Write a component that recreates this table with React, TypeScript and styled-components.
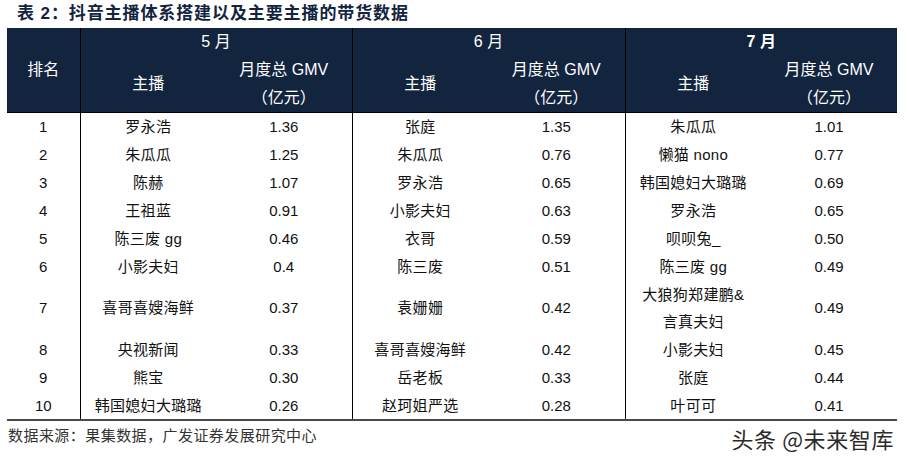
import React from "react";
import styled, { createGlobalStyle } from "styled-components";

const Global = createGlobalStyle`
  html, body { margin: 0; padding: 0; background: #fff; }
  body { font-family: "Liberation Sans", "Noto Sans CJK SC", sans-serif; }
`;

const NAVY = "#13243f";
const CJK = `"Liberation Sans", "Noto Sans CJK SC", sans-serif`;

const Page = styled.div`
  width: 907px;
  height: 462px;
  overflow: hidden;
  display: flex;
  flex-direction: column;
`;

const Title = styled.h1`
  margin: 0;
  height: 28px;
  padding-left: 17px;
  font-family: ${CJK};
  font-size: 17px;
  font-weight: 700;
  line-height: 28px;
  letter-spacing: 0.9px;
  color: ${NAVY};
  white-space: nowrap;
`;

const Table = styled.table`
  margin-left: 7px;
  width: 890px;
  table-layout: fixed;
  border-collapse: collapse;
  border-spacing: 0;
  font-family: ${CJK};
  color: #111;
`;

const Head = styled.thead`
  border-bottom: 1px solid #000;
`;

const Body = styled.tbody`
  border-bottom: 2px solid #4a4a4a;
`;

const HeadCell = styled.th<{ $divider?: boolean; $strong?: boolean }>`
  padding: 0;
  height: 28px;
  line-height: 28px;
  background: ${NAVY};
  color: #fff;
  font-size: 16px;
  font-weight: ${(p) => (p.$strong ? 700 : 400)};
  text-align: center;
  vertical-align: middle;
  white-space: nowrap;
  border-left: ${(p) => (p.$divider ? "1px solid #000" : "none")};
`;

const Row = styled.tr<{ $tall?: boolean }>`
  height: ${(p) => (p.$tall ? "55px" : "28px")};
`;

const Cell = styled.td<{ $divider?: boolean; $num?: boolean }>`
  padding: 0;
  text-align: center;
  vertical-align: middle;
  font-size: 15px;
  line-height: 27.5px;
  letter-spacing: ${(p) => (p.$num ? "0" : "0.3px")};
  white-space: nowrap;
  color: #111;
  border-left: ${(p) => (p.$divider ? "1px solid #000" : "none")};
`;

const Footer = styled.div`
  display: flex;
  justify-content: space-between;
  align-items: flex-start;
  padding: 3px 13px 0 8px;
`;

const Source = styled.div`
  font-family: ${CJK};
  font-size: 15px;
  line-height: 24px;
  letter-spacing: 0.45px;
  color: #333;
`;

const Watermark = styled.div`
  font-family: "Noto Sans CJK SC", sans-serif;
  font-size: 22px;
  line-height: 28px;
  color: #2b2b2b;
  letter-spacing: 0.6px;
  text-shadow: 1px 1px 0 #fff, -1px -1px 0 #fff;
`;

type Entry = [string, string];
type RowData = { rank: string; may: Entry; jun: Entry; jul: Entry; tall?: boolean };

const rows: RowData[] = [
  { rank: "1", may: ["罗永浩", "1.36"], jun: ["张庭", "1.35"], jul: ["朱瓜瓜", "1.01"] },
  { rank: "2", may: ["朱瓜瓜", "1.25"], jun: ["朱瓜瓜", "0.76"], jul: ["懒猫 nono", "0.77"] },
  { rank: "3", may: ["陈赫", "1.07"], jun: ["罗永浩", "0.65"], jul: ["韩国媳妇大璐璐", "0.69"] },
  { rank: "4", may: ["王祖蓝", "0.91"], jun: ["小影夫妇", "0.63"], jul: ["罗永浩", "0.65"] },
  { rank: "5", may: ["陈三废 gg", "0.46"], jun: ["衣哥", "0.59"], jul: ["呗呗兔_", "0.50"] },
  { rank: "6", may: ["小影夫妇", "0.4"], jun: ["陈三废", "0.51"], jul: ["陈三废 gg", "0.49"] },
  { rank: "7", may: ["喜哥喜嫂海鲜", "0.37"], jun: ["袁姗姗", "0.42"], jul: ["大狼狗郑建鹏&\n言真夫妇", "0.49"], tall: true },
  { rank: "8", may: ["央视新闻", "0.33"], jun: ["喜哥喜嫂海鲜", "0.42"], jul: ["小影夫妇", "0.45"] },
  { rank: "9", may: ["熊宝", "0.30"], jun: ["岳老板", "0.33"], jul: ["张庭", "0.44"] },
  { rank: "10", may: ["韩国媳妇大璐璐", "0.26"], jun: ["赵珂姐严选", "0.28"], jul: ["叶可可", "0.41"] },
];

const Name = ({ text }: { text: string }) => (
  <>
    {text.split("\n").map((line, i) => (
      <React.Fragment key={i}>
        {i > 0 && <br />}
        {line}
      </React.Fragment>
    ))}
  </>
);

export default function App() {
  return (
    <Page>
      <Global />
      <Title>表 2：抖音主播体系搭建以及主要主播的带货数据</Title>
      <Table>
        <colgroup>
          <col style={{ width: 73 }} />
          <col style={{ width: 136 }} />
          <col style={{ width: 136 }} />
          <col style={{ width: 136 }} />
          <col style={{ width: 137 }} />
          <col style={{ width: 136 }} />
          <col style={{ width: 136 }} />
        </colgroup>
        <Head>
          <tr>
            <HeadCell rowSpan={3}>排名</HeadCell>
            <HeadCell colSpan={2} $divider>5 月</HeadCell>
            <HeadCell colSpan={2} $divider>6 月</HeadCell>
            <HeadCell colSpan={2} $divider $strong>7 月</HeadCell>
          </tr>
          <tr>
            <HeadCell rowSpan={2} $divider>主播</HeadCell>
            <HeadCell>月度总 GMV</HeadCell>
            <HeadCell rowSpan={2} $divider>主播</HeadCell>
            <HeadCell>月度总 GMV</HeadCell>
            <HeadCell rowSpan={2} $divider>主播</HeadCell>
            <HeadCell>月度总 GMV</HeadCell>
          </tr>
          <tr>
            <HeadCell>（亿元）</HeadCell>
            <HeadCell>（亿元）</HeadCell>
            <HeadCell>（亿元）</HeadCell>
          </tr>
        </Head>
        <Body>
          {rows.map((r) => (
            <Row key={r.rank} $tall={r.tall}>
              <Cell $num>{r.rank}</Cell>
              <Cell $divider><Name text={r.may[0]} /></Cell>
              <Cell $num>{r.may[1]}</Cell>
              <Cell $divider><Name text={r.jun[0]} /></Cell>
              <Cell $num>{r.jun[1]}</Cell>
              <Cell $divider><Name text={r.jul[0]} /></Cell>
              <Cell $num>{r.jul[1]}</Cell>
            </Row>
          ))}
        </Body>
      </Table>
      <Footer>
        <Source>数据来源：果集数据，广发证券发展研究中心</Source>
        <Watermark>头条 @未来智库</Watermark>
      </Footer>
    </Page>
  );
}
